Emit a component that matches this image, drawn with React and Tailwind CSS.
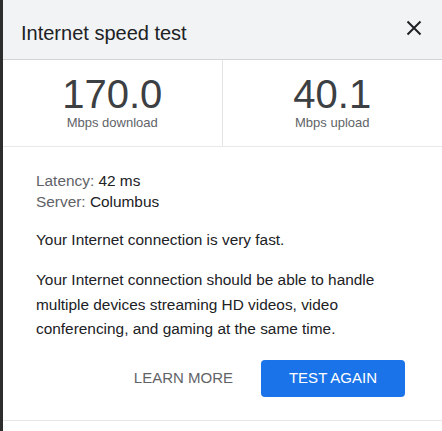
import React from "react";

export default function App() {
  return (
    <div
      className="flex w-[442px] h-[431px] bg-[#2d2d2d] overflow-hidden"
      style={{ fontFamily: '"Liberation Sans", Arial, sans-serif' }}
    >
      <div className="w-[3px] shrink-0 bg-[#2d2d2d]" />
      <div className="flex-1 flex flex-col bg-white">
        <div className="h-[60px] shrink-0 flex items-center justify-between bg-[#f1f3f4] border-b border-[#d4d4d4] pl-[18px] pr-[20px]">
          <span className="text-[20px] text-[#202124] pt-[6px]">Internet speed test</span>
          <svg width="16" height="16" viewBox="0 0 16 16" className="mt-[-4px]">
            <path d="M1.5 1.5 L14.5 14.5 M14.5 1.5 L1.5 14.5" stroke="#202124" strokeWidth="2" />
          </svg>
        </div>
        <div className="h-[87px] shrink-0 grid grid-cols-2 border-b border-[#e8e8e8]">
          <div className="flex flex-col items-center border-r border-[#e4e4e4] pt-[14px]">
            <span className="text-[40px] leading-[40px] text-[#3c4043]">170.0</span>
            <span className="mt-[1px] text-[13px] leading-[16px] text-[#5f6368]">Mbps download</span>
          </div>
          <div className="flex flex-col items-center pt-[14px]">
            <span className="text-[40px] leading-[40px] text-[#3c4043]">40.1</span>
            <span className="mt-[1px] text-[13px] leading-[16px] text-[#5f6368]">Mbps upload</span>
          </div>
        </div>
        <div className="flex flex-col pl-[33px] pr-[37px] text-[15.4px] text-[#202124]">
          <div className="mt-[23px] leading-[21px]">
            <div>
              <span className="text-[#5f6368]">Latency:</span> 42 ms
            </div>
            <div>
              <span className="text-[#5f6368]">Server:</span> Columbus
            </div>
          </div>
          <p className="mt-[16px] leading-[24px]">Your Internet connection is very fast.</p>
          <p className="mt-[16px] leading-[24.5px]">
            Your Internet connection should be able to handle multiple devices streaming HD videos, video
            conferencing, and gaming at the same time.
          </p>
          <div className="mt-[18px] flex items-center justify-end gap-[28px]">
            <span className="text-[15px] text-[#5f6368]">LEARN MORE</span>
            <button className="w-[144px] h-[37px] rounded-[4px] bg-[#1a73e8] text-white text-[15px]">
              TEST AGAIN
            </button>
          </div>
        </div>
        <div className="mt-auto mb-[10px] border-b border-[#e8e8e8]" />
      </div>
    </div>
  );
}
